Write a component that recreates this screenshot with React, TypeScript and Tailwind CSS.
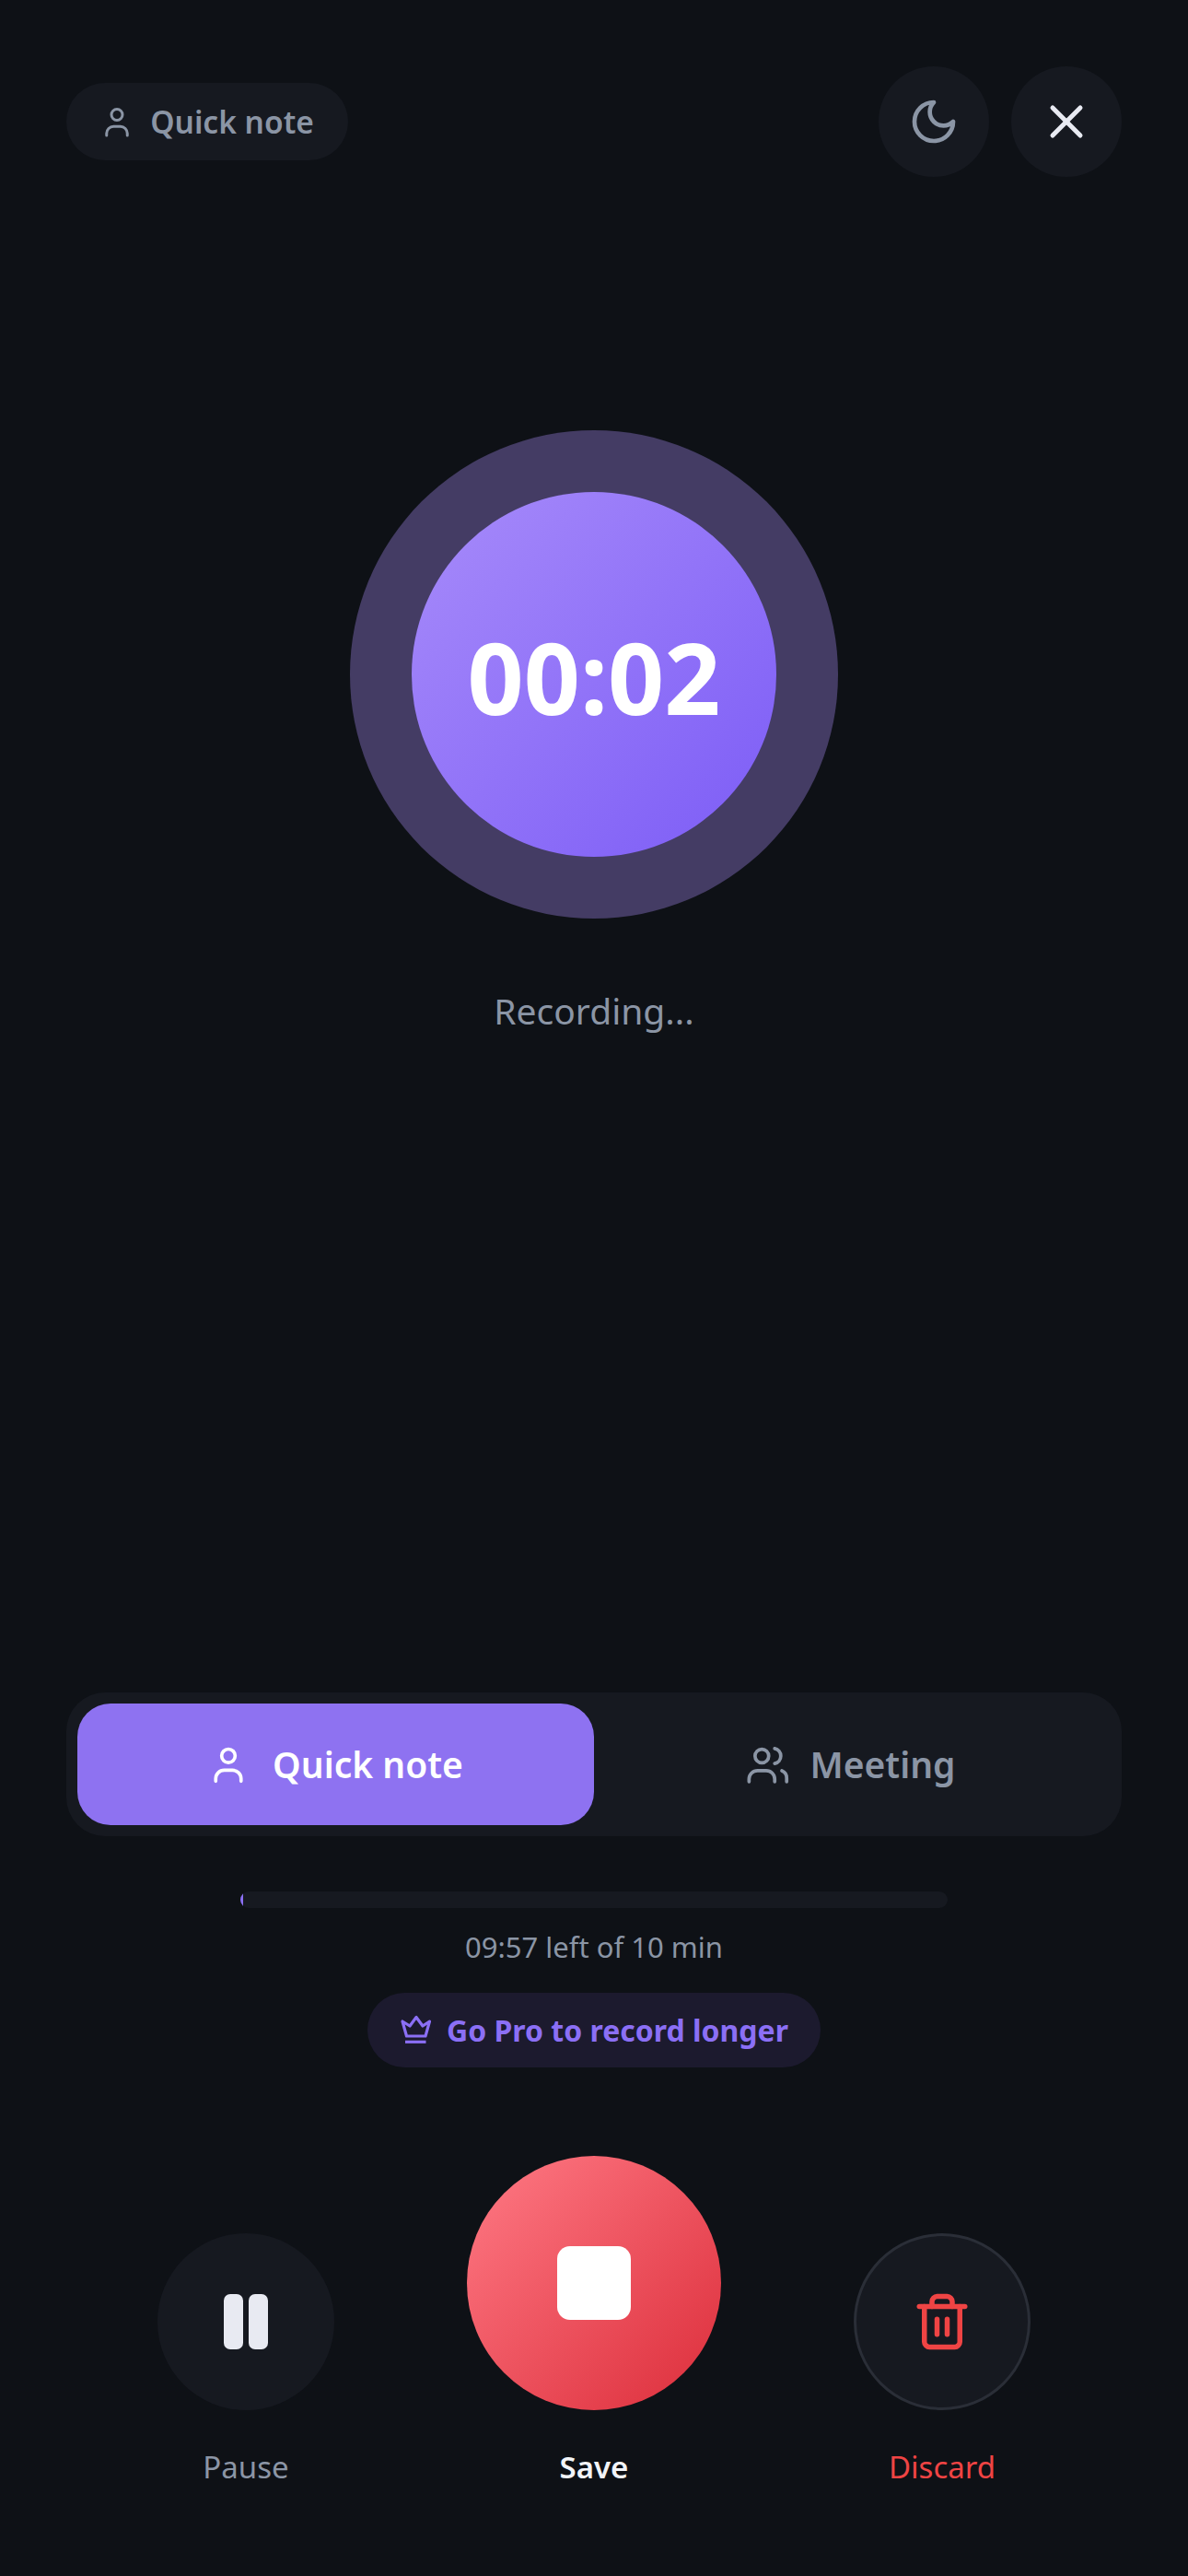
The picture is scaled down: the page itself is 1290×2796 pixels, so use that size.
import { X } from 'lucide-react'

const font = { fontFamily: '"Noto Sans", "Open Sans", sans-serif' }

function MoonIcon() {
  return (
    <svg width="56" height="56" viewBox="0 0 24 24" fill="none" stroke="currentColor" strokeWidth="2" strokeLinecap="round" strokeLinejoin="round">
      <path d="M12 3a6 6 0 0 0 9 9 9 9 0 1 1-9-9Z" />
    </svg>
  )
}

function PersonIcon({ size }: { size: number }) {
  return (
    <svg width={size} height={size} viewBox="0 0 24 24" fill="none" stroke="currentColor" strokeWidth="2" strokeLinecap="round" strokeLinejoin="round">
      <circle cx="12" cy="7" r="4" />
      <path d="M4.5 22v-1.5a5 5 0 0 1 5-5h5a5 5 0 0 1 5 5V22" />
    </svg>
  )
}

function PeopleIcon() {
  return (
    <svg width="52" height="44.6" viewBox="0 0 28 24" fill="none" stroke="currentColor" strokeWidth="2" strokeLinecap="round" strokeLinejoin="round">
      <circle cx="12" cy="7" r="4" />
      <path d="M4.5 22v-1.5a5 5 0 0 1 5-5h5a5 5 0 0 1 5 5V22" />
      <path d="M19.5 2.6a4.5 4.5 0 0 1 0 8.8" />
      <path d="M23.7 15.6a4.6 4.6 0 0 1 2.8 4.4V22" />
    </svg>
  )
}

function CrownIcon() {
  return (
    <svg width="36" height="36" viewBox="11 3 36 36" fill="none" stroke="currentColor" strokeWidth="3.2" strokeLinecap="butt" strokeLinejoin="round">
      <path d="M14 11l4.5 16H39l4.5-16-7.5 5-7-9.5-7 9.5z" />
      <path d="M17 33.3h22.5" />
    </svg>
  )
}

function TrashIcon() {
  return (
    <svg width="66" height="66" viewBox="0 0 24 24" fill="none" stroke="currentColor" strokeWidth="2" strokeLinecap="round" strokeLinejoin="round">
      <path d="M3 6h18" />
      <path d="M19 6v14c0 1-1 2-2 2H7c-1 0-2-1-2-2V6" />
      <path d="M8 6V4c0-1 1-2 2-2h4c1 0 2 1 2 2v2" />
      <path d="M10 11v6" />
      <path d="M14 11v6" />
    </svg>
  )
}

function ControlButton({
  label,
  labelClass,
  circleClass,
  children,
}: {
  label: string
  labelClass: string
  circleClass: string
  children: React.ReactNode
}) {
  return (
    <div className="flex w-[276px] flex-col items-center">
      <div className={`flex items-center justify-center rounded-full ${circleClass}`}>{children}</div>
      <span className={`mt-[40px] text-[33px] leading-[44px] ${labelClass}`}>{label}</span>
    </div>
  )
}

export default function App() {
  return (
    <div style={font} className="flex h-[2796px] w-[1290px] flex-col bg-[#0e1116] px-[72px]">
      {/* Top bar */}
      <div className="mt-[72px] flex h-[120px] items-center justify-between">
        <div className="flex h-[84px] w-[306px] items-center justify-center gap-[18px] rounded-full bg-[#161920] text-[#8b95a5]">
          <PersonIcon size={36} />
          <span className="text-[33.5px] font-semibold">Quick note</span>
        </div>
        <div className="flex gap-[24px]">
          <button className="flex h-[120px] w-[120px] items-center justify-center rounded-full bg-[#161920] text-[#8b95a5]">
            <MoonIcon />
          </button>
          <button className="flex h-[120px] w-[120px] items-center justify-center rounded-full bg-[#161920] text-[#e8eaf2]">
            <X size={60} strokeWidth={2} />
          </button>
        </div>
      </div>

      {/* Timer */}
      <div className="mt-[275px] flex flex-col items-center">
        <div className="flex h-[530px] w-[530px] items-center justify-center rounded-full bg-[#443c64]">
          <div className="flex h-[396px] w-[396px] items-center justify-center rounded-full bg-linear-to-br/srgb from-[#a78bfa] to-[#7c5cf6]">
            <span className="pt-[4px] text-[107px] font-bold leading-none text-white">00:02</span>
          </div>
        </div>
        <span className="mt-[74px] text-[39px] leading-[52px] text-[#8b95a5]">Recording...</span>
      </div>

      {/* Mode switch */}
      <div className="mt-auto flex h-[156px] rounded-[42px] bg-[#161920] p-[12px]">
        <div className="flex flex-1 items-center justify-center gap-[26px] rounded-[36px] bg-[#8e72f1] text-white">
          <PersonIcon size={44} />
          <span className="text-[39px] font-semibold">Quick note</span>
        </div>
        <div className="flex flex-1 items-center justify-center text-[#8b95a5]">
          <div className="mr-[8px] flex items-center gap-[22px]">
            <PeopleIcon />
            <span className="text-[39px] font-semibold">Meeting</span>
          </div>
        </div>
      </div>

      {/* Limit */}
      <div className="mt-[60px] flex flex-col items-center">
        <div className="h-[18px] w-[768px] overflow-hidden rounded-full bg-[#161920]">
          <div className="h-full w-[3px] bg-[#8b6ff5]" />
        </div>
        <span className="mt-[22px] text-[31px] leading-[40px] text-[#8b95a5]">09:57 left of 10 min</span>
        <div className="mt-[30px] flex h-[81px] w-[492px] items-center justify-center gap-[15px] rounded-full bg-[#1c1a2e] text-[#8b6ff5]">
          <CrownIcon />
          <span className="text-[32px] font-bold">Go Pro to record longer</span>
        </div>
      </div>

      {/* Controls */}
      <div className="mb-[96px] mt-[96px] flex items-end justify-center gap-[102px]">
        <ControlButton label="Pause" labelClass="text-[#8b95a5]" circleClass="h-[192px] w-[192px] bg-[#161920]">
          <div className="flex gap-[6px]">
            <div className="h-[60px] w-[21px] rounded-[7px] bg-[#e8eaf2]" />
            <div className="h-[60px] w-[21px] rounded-[7px] bg-[#e8eaf2]" />
          </div>
        </ControlButton>
        <ControlButton
          label="Save"
          labelClass="font-semibold text-[#f2f4f8]"
          circleClass="h-[276px] w-[276px] bg-linear-to-br/srgb from-[#ff7a85] to-[#dc2d3a]"
        >
          <div className="h-[80px] w-[80px] rounded-[14px] bg-white" />
        </ControlButton>
        <ControlButton
          label="Discard"
          labelClass="text-[#ef4444]"
          circleClass="h-[192px] w-[192px] border-[3px] border-[#2a2e37] bg-[#161920] text-[#ef4444]"
        >
          <TrashIcon />
        </ControlButton>
      </div>
    </div>
  )
}
